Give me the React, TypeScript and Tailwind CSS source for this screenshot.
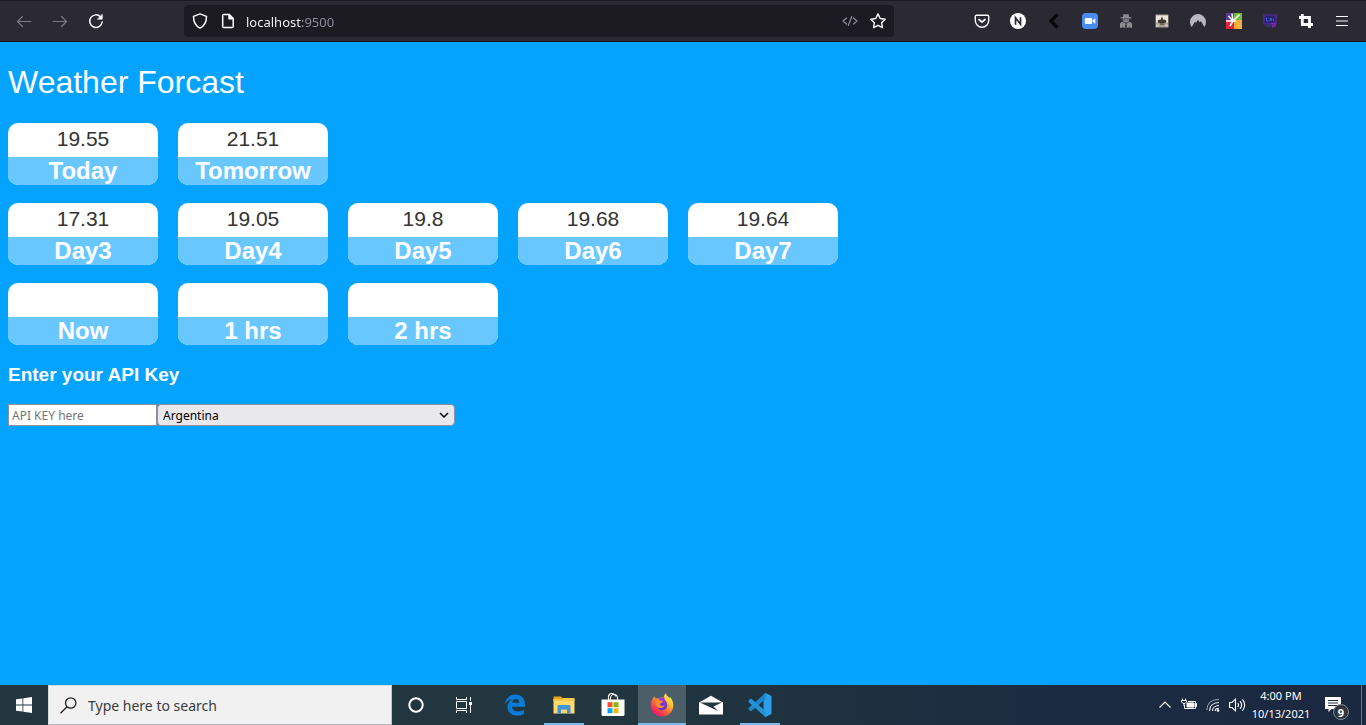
import type { ReactNode } from "react";

type Reading = { label: string; value: string };

const rows: Reading[][] = [
  [
    { label: "Today", value: "19.55" },
    { label: "Tomorrow", value: "21.51" },
  ],
  [
    { label: "Day3", value: "17.31" },
    { label: "Day4", value: "19.05" },
    { label: "Day5", value: "19.8" },
    { label: "Day6", value: "19.68" },
    { label: "Day7", value: "19.64" },
  ],
  [
    { label: "Now", value: "" },
    { label: "1 hrs", value: "" },
    { label: "2 hrs", value: "" },
  ],
];

function ToolButton({ label, children }: { label: string; children: ReactNode }) {
  return (
    <button type="button" aria-label={label} className="flex h-8 w-9 shrink-0 items-center justify-center">
      {children}
    </button>
  );
}

function Stroke({ children, color = "#fbfbfe", width = 1.4 }: { children: ReactNode; color?: string; width?: number }) {
  return (
    <svg viewBox="0 0 16 16" className="size-4 shrink-0" fill="none" stroke={color} strokeWidth={width} strokeLinecap="round" strokeLinejoin="round" aria-hidden="true">
      {children}
    </svg>
  );
}

function BrowserBar() {
  return (
    <header className="flex h-[42px] shrink-0 items-center border-t border-b border-t-[#1c1b22] border-b-[#15141a] bg-[#2b2a33] px-1.5">
      <nav className="flex" aria-label="Navigation">
        <ToolButton label="Back">
          <Stroke color="#7b7a84" width={1.2}>
            <path d="M15 8.500H1.500M6.500 3.500 1.500 8.500 6.500 13.500" />
          </Stroke>
        </ToolButton>
        <ToolButton label="Forward">
          <Stroke color="#7b7a84" width={1.2}>
            <path d="M1 8.500h13.500M9.500 3.500 14.500 8.500 9.500 13.500" />
          </Stroke>
        </ToolButton>
        <ToolButton label="Reload">
          <Stroke width={1.5}>
            <path d="M14.200 9A6.300 6.300 0 1 1 12.600 3.900" />
            <path d="M14.300 1.600v4.600H9.700z" fill="#fbfbfe" strokeWidth="0.6" />
          </Stroke>
        </ToolButton>
      </nav>

      <div className="mx-[70px] flex h-8 min-w-0 flex-1 items-center rounded bg-[#1c1b22] px-2">
        <Stroke width={1.5}>
          <path d="M8 .900 14.500 3.400C14.500 8.500 13 12.500 8 15.200 3 12.500 1.500 8.500 1.500 3.400z" />
        </Stroke>
        <span className="ml-3 flex">
          <Stroke width={1.5}>
            <path d="M3.700 1.500h5.500l4 4v8a1 1 0 0 1-1 1H3.700a1 1 0 0 1-1-1v-11a1 1 0 0 1 1-1z" />
            <path d="M9 1.500v4.200h4.200z" fill="#fbfbfe" />
          </Stroke>
        </span>
        <input
          type="text"
          aria-label="Address"
          defaultValue="localhost:9500"
          className="ml-2.5 min-w-0 flex-1 bg-[linear-gradient(to_right,#fbfbfe_55px,#8f8f9d_55px)] bg-clip-text pt-0.5 font-['Noto_Sans',sans-serif] text-[13px] leading-5 text-transparent outline-none"
        />
        <button type="button" aria-label="View source" className="mr-3 flex">
          <Stroke color="#8f8f9d" width={1.2}>
            <path d="M4.500 5 1 8l3.500 3M11.500 5 15 8l-3.500 3M9.800 3.500 6.300 12.500" />
          </Stroke>
        </button>
        <button type="button" aria-label="Bookmark" className="flex">
          <Stroke width={1.4}>
            <path d="m8 .900 2.200 4.600 5 .700-3.600 3.500.900 5L8 12.300 3.500 14.700l.900-5L.800 6.200l5-.700z" />
          </Stroke>
        </button>
      </div>

      <nav className="flex" aria-label="Extensions">
        <ToolButton label="Pocket">
          <Stroke width={1.4}>
            <path d="M2.300 2.300h11.400a1 1 0 0 1 1 1V7.500a6.700 6.700 0 0 1-13.400 0V3.300a1 1 0 0 1 1-1z" />
            <path d="M5 6.500 8 9.200l3-2.700" strokeWidth="1.700" />
          </Stroke>
        </ToolButton>
        <ToolButton label="Notes">
          <svg viewBox="0 0 16 16" className="size-4" aria-hidden="true">
            <circle cx="8" cy="8" r="8" fill="#fff" />
            <path d="M5.500 11.700V4.800l5 6.400V4.300" fill="none" stroke="#2b2a33" strokeWidth="1.700" />
          </svg>
        </ToolButton>
        <ToolButton label="Previous">
          <svg viewBox="0 0 16 16" className="size-4" fill="none" aria-hidden="true">
            <path d="M11.500 1.500 5 8l6.500 6.500" stroke="#08080b" strokeWidth="3.200" />
          </svg>
        </ToolButton>
        <ToolButton label="Video meeting">
          <svg viewBox="0 0 16 16" className="size-4" aria-hidden="true">
            <rect width="16" height="16" rx="4" fill="#4a8cf7" />
            <rect x="2.800" y="5" width="7.400" height="6" rx="1.300" fill="#fff" />
            <path d="m10.700 7.200 2.600-1.900v5.400l-2.600-1.900z" fill="#fff" />
          </svg>
        </ToolButton>
        <ToolButton label="Privacy">
          <svg viewBox="0 0 16 16" className="size-4" fill="#8d8c91" aria-hidden="true">
            <path d="M5.500 1 8 1.600l2.500-.6.600 3 2.400.5v1h-11v-1L4.900 4z" />
            <path d="M4.800 6h6.400v1.500a2.800 2.800 0 0 1-2.500 2H7.300a2.800 2.800 0 0 1-2.500-2z" />
            <path d="M4.200 8.800 7.500 10.500v1.500L7 12.800l.500 2H5.300L4.800 13l-.500 1.800H2V10.500zM11.800 8.800 8.500 10.500v1.500l.500.800-.500 2h2.200l.500-1.800.500 1.800H14V10.500z" />
            <path d="M5.300 6.600h2.200v1H5.300zM8.500 6.600h2.200v1H8.500z" fill="#4c4b53" />
          </svg>
        </ToolButton>
        <ToolButton label="Picture extension">
          <svg viewBox="0 0 16 16" className="size-4" aria-hidden="true">
            <rect x="1.500" y="1.500" width="13" height="13" fill="#a89d93" />
            <path d="M2 2.500h12v7H2z" fill="#efe7dc" />
            <path d="M3.500 8 5 6.500 6.500 7 8 3.500 9.500 7 11 6.500 12.500 8l-1 2h-7z" fill="#403832" />
            <path d="M6 10h4v2H6z" fill="#6d6158" />
            <path d="M2 11.500h3v2H2zM11 11.500h3v2h-3z" fill="#d3c8bb" />
          </svg>
        </ToolButton>
        <ToolButton label="VPN">
          <svg viewBox="0 0 16 16" className="size-4" aria-hidden="true">
            <path d="M1.700 14A8 8 0 1 1 14.300 14L10.900 7.900 9.800 9.600 8 6.700 5.900 9.900 5.100 8.400z" fill="#b9b8c0" />
          </svg>
        </ToolButton>
        <ToolButton label="Color burst">
          <svg viewBox="0 0 16 16" className="size-4" aria-hidden="true">
            <path d="M0 0h8v7H0z" fill="#5d3a9c" />
            <path d="M8 0h8v7H8z" fill="#72bd3e" />
            <path d="M0 7h8v9H0z" fill="#e5243b" />
            <path d="M8 7h8v9H8z" fill="#f4b23a" />
            <path d="M7 8 2.500 3M7 8 6 .500M7 8l6.500-6.500M7 8H0M7 8l-3 5M7 8h3" stroke="#fff" strokeWidth="1.500" />
          </svg>
        </ToolButton>
        <ToolButton label="Pixel extension">
          <svg viewBox="0 0 16 16" className="size-4" aria-hidden="true">
            <path d="M2 2h12v9H2z" fill="#2b2070" stroke="#5a2aa6" strokeWidth="1.200" />
            <path d="M4.500 4.500V8h2M8 8V5.500h1.500V8M11.500 8V5.500" fill="none" stroke="#376bc9" strokeWidth="1" />
            <path d="M3 13h6" stroke="#4d2c9c" strokeWidth="1" />
            <path d="M9 10.500h4V13h-2.500v1.500" fill="none" stroke="#7b2cb0" strokeWidth="1.300" />
          </svg>
        </ToolButton>
        <ToolButton label="Capture">
          <svg viewBox="0 0 16 16" className="size-4" fill="none" stroke="#fff" strokeWidth="2.800" aria-hidden="true">
            <path d="M4.300 1v10.500h10.700M1 4.500h10.500v10.500" />
          </svg>
        </ToolButton>
        <ToolButton label="Menu">
          <svg viewBox="0 0 16 16" className="size-4" stroke="#fbfbfe" strokeWidth="1.200" aria-hidden="true">
            <path d="M2 3.500h12M2 8h12M2 12.500h12" />
          </svg>
        </ToolButton>
      </nav>
    </header>
  );
}

function WeatherCard({ label, value }: Reading) {
  return (
    <article className="w-[150px] overflow-hidden rounded-[10px] bg-white text-center">
      <p className="h-[34px] text-[21px] leading-8 text-[#333333]">{value}</p>
      <h2 className="h-7 bg-[#69c7ff] text-2xl leading-7 font-bold text-white">{label}</h2>
    </article>
  );
}

function Forecast() {
  return (
    <main className="flex flex-1 flex-col bg-[#03a3ff] px-2 pt-[22px] font-['Liberation_Sans',Arial,sans-serif] text-white">
      <h1 className="text-[32px] leading-9">Weather Forcast</h1>
      <div className="mt-[23px] flex flex-col gap-[18px]">
        {rows.map((row) => (
          <section key={row[0].label} className="flex flex-wrap gap-5">
            {row.map((item) => (
              <WeatherCard key={item.label} label={item.label} value={item.value} />
            ))}
          </section>
        ))}
      </div>
      <form className="mt-[19px]">
        <label htmlFor="api-key" className="block text-[19px] leading-[22px] font-bold">
          Enter your API Key
        </label>
        <div className="mt-[18px] flex font-['Noto_Sans',sans-serif] text-xs text-black">
          <input
            id="api-key"
            type="text"
            placeholder="API KEY here"
            className="h-[22px] w-[149px] border border-[#8f8f9d] bg-white px-[3px] placeholder:text-[#757575]"
          />
          <div className="relative">
            <select aria-label="Country" className="h-[22px] w-[298px] appearance-none rounded border border-[#8f8f9d] bg-[#e9e9ed] px-[5px] pt-0.5">
              <option>Argentina</option>
            </select>
            <svg viewBox="0 0 10 10" className="pointer-events-none absolute top-1.5 right-1.5 size-2.5" fill="none" stroke="#000" strokeWidth="1.500" aria-hidden="true">
              <path d="M1 3l4 4 4-4" />
            </svg>
          </div>
        </div>
      </form>
    </main>
  );
}

function TaskButton({ label, state = "idle", children }: { label: string; state?: "idle" | "open" | "active"; children: ReactNode }) {
  return (
    <button type="button" aria-label={label} className={`flex h-10 w-12 shrink-0 flex-col items-center ${state === "active" ? "bg-[#4c5f68]" : ""}`}>
      <span className="flex h-[38px] items-center pt-0.5">{children}</span>
      {state === "open" && <span className="h-0.5 w-10 bg-[#76b9ed]" />}
      {state === "active" && <span className="h-0.5 w-12 bg-[#76b9ed]" />}
    </button>
  );
}

function Taskbar() {
  return (
    <footer className="flex h-10 shrink-0 items-stretch bg-[linear-gradient(to_right,#21363f_0%,#21363f_45%,#1b2b41_80%,#1b2940_100%)] font-['Noto_Sans',sans-serif] text-white">
      <TaskButton label="Start">
        <svg viewBox="0 0 16 16" className="size-4" fill="#fff" aria-hidden="true">
          <path d="M0 2.300 6.500 1.400v6.100H0zM7.300 1.300 16 0v7.500H7.300zM0 8.400h6.500v6.200L0 13.700zM7.300 8.400H16V16l-8.700-1.300z" />
        </svg>
      </TaskButton>
      <div className="flex w-[344px] items-center border border-t-[#d5dadd] border-r-[#c0c4c6] border-b-[#b4b6b7] border-l-[#d5dadd] bg-[#f1f1f1] px-[11px]">
        <svg viewBox="0 0 17 17" className="size-[17px] shrink-0" fill="none" stroke="#202020" strokeWidth="1.300" aria-hidden="true">
          <circle cx="10.700" cy="6" r="5.200" />
          <path d="M7 9.700.500 16.300" />
        </svg>
        <input
          type="text"
          aria-label="Search"
          placeholder="Type here to search"
          className="ml-[11px] min-w-0 flex-1 bg-transparent pt-0.5 text-sm outline-none placeholder:text-[#3c3c3c]"
        />
      </div>
      <TaskButton label="Cortana">
        <svg viewBox="0 0 16 16" className="size-4" fill="none" stroke="#fff" strokeWidth="2" aria-hidden="true">
          <circle cx="8" cy="8" r="6.700" />
        </svg>
      </TaskButton>
      <TaskButton label="Task view">
        <svg viewBox="0 0 16 16" className="size-4" fill="none" stroke="#fff" strokeWidth="1" aria-hidden="true">
          <path d="M.500 0v2.500h10V0M.500 16v-2.500h10V16M.500 4.500h10v7H.500zM14.500 0v4M14.500 8v8" />
          <path d="M13 5h3v3h-3z" fill="#fff" stroke="none" />
        </svg>
      </TaskButton>
      <div className="ml-[3px] flex gap-px">
        <TaskButton label="Edge">
          <svg viewBox="0 0 22 22" className="size-[22px]" aria-hidden="true">
            <path d="M1 10.200C1.600 4.200 5.700.600 11.300.600c6 0 9.700 4.200 9.700 9.800v2.300H8c.200 3.100 2.600 4.700 6 4.700 2.200 0 4.200-.600 5.900-1.700v4.400c-1.900 1-4.100 1.500-6.700 1.500-6 0-9.700-3.500-9.700-8.600 0-3.400 1.800-6.200 4.700-7.700C4.900 5.800 2.600 7.500 1 10.200zm7.200-1.400h7.100c0-2.400-1.200-3.900-3.400-3.900S8.500 6.500 8.200 8.800z" fill="#0b7bd8" />
          </svg>
        </TaskButton>
        <TaskButton label="File Explorer" state="open">
          <svg viewBox="0 0 22 20" className="h-5 w-[22px]" aria-hidden="true">
            <path d="M.500 1.500h7.500l2 2v3H.500z" fill="#e5a522" />
            <path d="M.500 4h21v14.500H.500z" fill="#ffd969" />
            <path d="M.500 4h8.500l1-1h11.500v3H.500z" fill="#f8c946" />
            <path d="M4.500 18.500v-7A1.500 1.500 0 0 1 6 10h10a1.500 1.500 0 0 1 1.500 1.500v7h-3.500V14.500H8v4z" fill="#3e94d7" />
          </svg>
        </TaskButton>
        <TaskButton label="Store">
          <svg viewBox="0 0 24 24" className="size-6" aria-hidden="true">
            <path d="M7.500 7V4.500a3.500 3.500 0 0 1 7-1M9.500 7V5a3.500 3.500 0 0 1 7 0v2" fill="none" stroke="#fff" strokeWidth="1.100" />
            <path d="M.500 6.500h23v15a1.500 1.500 0 0 1-1.500 1.500H2a1.500 1.500 0 0 1-1.500-1.500z" fill="#fff" />
            <path d="M6.500 9.200h5v5h-5z" fill="#f25022" />
            <path d="M12.500 9.200h5v5h-5z" fill="#7fba00" />
            <path d="M6.500 15.200h5v5h-5z" fill="#00a4ef" />
            <path d="M12.500 15.200h5v5h-5z" fill="#ffb900" />
          </svg>
        </TaskButton>
        <TaskButton label="Firefox" state="active">
          <svg viewBox="0 0 24 24" className="size-6" aria-hidden="true">
            <defs>
              <linearGradient id="fox" x1="0.850" y1="0.100" x2="0.200" y2="0.950">
                <stop offset="0" stopColor="#fff44f" />
                <stop offset="0.300" stopColor="#ffbd2c" />
                <stop offset="0.550" stopColor="#ff7139" />
                <stop offset="0.850" stopColor="#f52b55" />
                <stop offset="1" stopColor="#e31587" />
              </linearGradient>
              <linearGradient id="globe" x1="0.500" y1="0" x2="0.500" y2="1">
                <stop offset="0" stopColor="#a03be5" />
                <stop offset="1" stopColor="#5b36be" />
              </linearGradient>
            </defs>
            <path d="M2.300 6.500 4 3.300l1.700 2.500c1-.400 2.200-.300 2.900 0C10 4.500 12.500 4 14 4.300c0-1.600.700-3 2-4 .100 2.400 2.100 3.300 3.500 5l.300-1.600c2.300 2.400 3.700 5.700 3.500 9C23 19 18 23.500 12 23.500S1 18.700.700 13c-.100-2.500.500-4.800 1.600-6.500z" fill="url(#fox)" />
            <path d="M9 6.200C10.500 4.500 12.700 4 14.500 4.500c-.300 1.500.5 2.500 1.500 3.700 2.500 3.500 1.300 8.800-3.500 9.100-3.500.200-5.800-2.800-5.500-5.800z" fill="url(#globe)" />
            <path d="M5.700 6c1.600-.500 3.300 0 4.400 1.500 1.200-.200 2.300.100 3 .800-.500 1.500-2.800 1.500-3.300 2.600.500 2.200 3 2.500 5 1.300-1.200 2.900-5 4-7.600 1.500C5.500 11.700 5 8.500 5.700 6z" fill="#ff8a2b" />
          </svg>
        </TaskButton>
        <TaskButton label="Mail">
          <svg viewBox="0 0 24 20" className="h-5 w-6" aria-hidden="true">
            <path d="M0 7.500 12 .800l12 6.700V19.500H0z" fill="#fff" />
            <path d="M1 7.500h22l-8.500 4 4.500 4.500z" fill="#21363f" />
          </svg>
        </TaskButton>
        <TaskButton label="Visual Studio Code" state="open">
          <svg viewBox="0 0 24 24" className="size-6" aria-hidden="true">
            <path d="m17.500 0 6 3v18l-6 3-2-1.500v-21z" fill="#2b9fe9" />
            <path d="M17.500 0v6L3 18.500l-2.500-2v-1.500z" fill="#1b83c9" />
            <path d="M17.500 24v-6L3 5.500l-2.500 2V9z" fill="#2492d8" />
          </svg>
        </TaskButton>
      </div>

      <div className="ml-auto flex items-center">
        <button type="button" aria-label="Show hidden icons" className="flex w-6 justify-center">
          <svg viewBox="0 0 12 12" className="size-3" fill="none" stroke="#fff" strokeWidth="1.200" aria-hidden="true">
            <path d="M.500 8.500 6 3l5.500 5.500" />
          </svg>
        </button>
        <button type="button" aria-label="Battery" className="flex w-6 justify-center">
          <svg viewBox="0 0 16 16" className="size-4" fill="none" stroke="#fff" strokeWidth="1" aria-hidden="true">
            <path d="M7 4.500h7.500v7H3.500V8M14.500 6.500h1v3h-1" />
            <path d="M6 6h7v4H6z" fill="#fff" />
            <path d="M1.500 1.500v2M4.500 1.500v2M.500 3.500h5v1.500L4 6.500H2L.500 5zM3 6.500V9" />
          </svg>
        </button>
        <button type="button" aria-label="Network" className="flex w-6 justify-center">
          <svg viewBox="0 0 14 14" className="size-3.5" fill="none" stroke="#fff" strokeWidth="1.100" aria-hidden="true">
            <path d="M1 12C1 5.500 5.500 1.500 13 1.500" stroke="#9aa4b3" />
            <path d="M3.500 13C3.500 8 7 4.500 13 4.500M6.500 13C6.500 10 9 7.500 13 7.500M9.300 13c0-1.700 1.500-2.700 3.700-2.700" />
            <circle cx="12" cy="12.500" r="1.300" fill="#fff" stroke="none" />
          </svg>
        </button>
        <button type="button" aria-label="Volume" className="flex w-6 justify-center">
          <svg viewBox="0 0 17 14" className="h-3.5 w-[17px]" fill="none" stroke="#fff" strokeWidth="1.100" aria-hidden="true">
            <path d="M.600 4.500H3l3.500-3.300v11.600L3 9.500H.600zM8.700 5c1.100 1.300 1.100 2.700 0 4M11 3.200c2 2.300 2 5.300 0 7.600M13.400 1.400c3 3.300 3 7.900 0 11.200" />
          </svg>
        </button>
        <button type="button" className="flex w-16 flex-col items-center text-[11px] leading-[18px]">
          <span>4:00 PM</span>
          <span>10/13/2021</span>
        </button>
        <button type="button" aria-label="Notifications" className="relative flex h-10 w-12 items-center pl-3">
          <svg viewBox="0 0 16 16" className="size-4" aria-hidden="true">
            <path d="M0 0h16v12H6.500L3.500 15v-3H0z" fill="#fff" />
            <path d="M3 3.500h10M3 6h10M3 8.500h10" stroke="#1b2a40" strokeWidth="1" />
          </svg>
          <span className="absolute top-[19px] left-5 flex size-4 items-center justify-center rounded-full border border-[#84898f] bg-[#30353d] text-[11px] leading-none font-bold">9</span>
        </button>
        <span className="mr-1 h-10 w-px bg-[#657080]" />
      </div>
    </footer>
  );
}

export default function App() {
  return (
    <div className="flex min-h-screen flex-col">
      <BrowserBar />
      <Forecast />
      <Taskbar />
    </div>
  );
}
